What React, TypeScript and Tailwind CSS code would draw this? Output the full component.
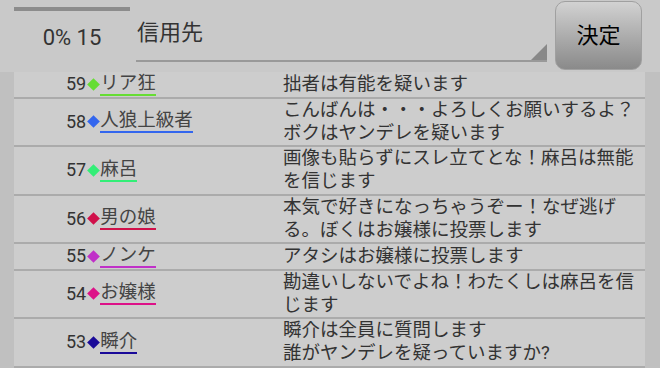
const rows = [
  { no: 59, name: "リア狂", color: "#66dd33", msg: "拙者は有能を疑います" },
  { no: 58, name: "人狼上級者", color: "#3366ee", msg: "こんばんは・・・よろしくお願いするよ？\nボクはヤンデレを疑います" },
  { no: 57, name: "麻呂", color: "#33ee77", msg: "画像も貼らずにスレ立てとな！麻呂は無能を信じます" },
  { no: 56, name: "男の娘", color: "#d0104a", msg: "本気で好きになっちゃうぞー！なぜ逃げる。ぼくはお嬢様に投票します" },
  { no: 55, name: "ノンケ", color: "#c030c8", msg: "アタシはお嬢様に投票します" },
  { no: 54, name: "お嬢様", color: "#dd1188", msg: "勘違いしないでよね！わたくしは麻呂を信じます" },
  { no: 53, name: "瞬介", color: "#1a0a99", msg: "瞬介は全員に質問します\n誰がヤンデレを疑っていますか?" },
];

export default function App() {
  return (
    <div className="w-[660px] h-[368px] overflow-hidden bg-[#c0c0c0] font-['Roboto','Noto_Sans_CJK_JP',sans-serif] text-[#333]">
      {/* header */}
      <div className="h-[72px] flex bg-[#c9c9c9]">
        <div className="w-[136px] pl-[14px] pt-[7px]">
          <div className="w-[116px] h-[4px] bg-[#8c8c8c]" />
          <div className="w-[116px] text-center text-[22px] leading-[26px] mt-[14px]">0% 15</div>
        </div>
        <div className="w-[411px] h-[62px] relative border-b-2 border-[#999]">
          <div className="pl-px pt-[19px] text-[22px] leading-[28px]">信用先</div>
          <div className="absolute right-0 bottom-0 w-0 h-0 border-l-[16px] border-l-transparent border-b-[16px] border-b-[#888]" />
        </div>
        <div className="ml-[8px] mt-px w-[87px] h-[69px] rounded-[10px] bg-gradient-to-b from-[#d2d2d2] to-[#8a8a8a] border border-[#a0a0a0] flex items-center justify-center text-[22px] text-black">
          決定
        </div>
      </div>
      {/* list */}
      <div className="flex">
        <div className="w-[14px]" />
        <div className="w-[631px] bg-[#cdcdcd]">
          {rows.map((r) => (
            <div key={r.no} className="grid grid-cols-[269px_362px] border-b-2 border-[#ababab]">
              <div className="flex items-center pl-[52px] min-h-[24.5px]">
                <span className="text-[18px] leading-[20px]">{r.no}</span>
                <span className="w-[9px] h-[9px] rotate-45 ml-[3px] mr-[2px]" style={{ backgroundColor: r.color }} />
                <span className="text-[18.5px] leading-[21px] border-b-2 text-[#444]" style={{ borderColor: r.color }}>
                  {r.name}
                </span>
              </div>
              <div className="text-[18.5px] leading-[23.25px] whitespace-pre-line self-center">{r.msg}</div>
            </div>
          ))}
        </div>
      </div>
    </div>
  );
}
